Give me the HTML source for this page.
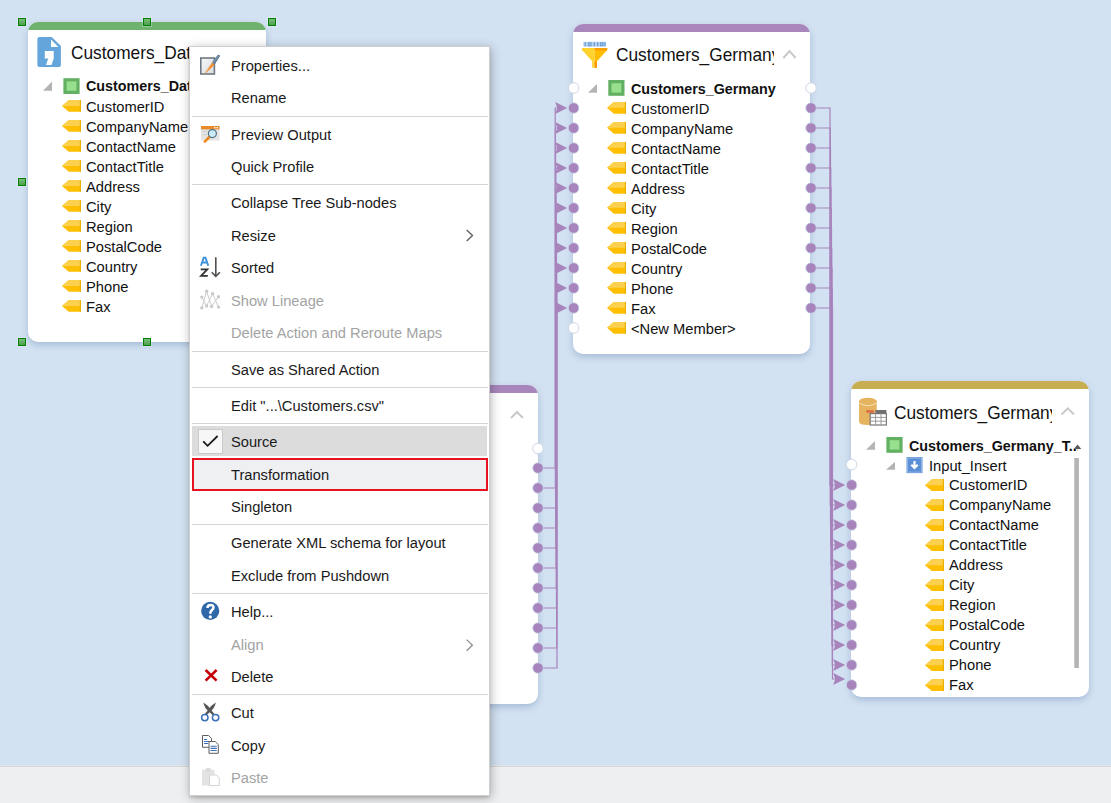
<!DOCTYPE html>
<html><head><meta charset="utf-8">
<style>
*{margin:0;padding:0;box-sizing:border-box}
html,body{width:1111px;height:803px;overflow:hidden}
body{background:#d3e2f2;position:relative;font-family:"Liberation Sans",sans-serif;color:#111}
.abs{position:absolute}
#bar{position:absolute;left:0;top:765px;width:1111px;height:38px;background:linear-gradient(#e3e9ea 0,#e3e9ea 1px,#d3d4d6 1px,#d3d4d6 2px,#f0f1f3 2px,#f0f1f3 3px,#eeeff1 3px)}
.card{position:absolute;background:#fff;border-radius:10px;overflow:hidden;box-shadow:0 3px 7px rgba(80,115,165,.34)}
.band{position:absolute;left:0;top:0;right:0;height:8px}
.tx{position:absolute;white-space:nowrap;transform-origin:0 0}
.h{position:absolute;width:8px;height:8px;background:linear-gradient(#79bd79,#4f9f4f);border:1.5px solid #008000;box-shadow:0 0 0 1px rgba(235,240,255,.35)}
#menu{position:absolute;left:189px;top:46px;width:301px;height:750px;background:#fff;border:1px solid #cfcfcf;box-shadow:1px 2px 10px rgba(0,0,0,.28),0 2px 2px rgba(0,0,0,.1)}
.msep{position:absolute;left:2px;width:296px;height:1px;background:#d5d5d5}
.hl{position:absolute;left:2px;width:295px;background:#dcdcdc}
.rd{position:absolute;left:2px;width:296px;background:#eef0f2;border:2.7px solid #e8131f}
</style></head><body>
<div id="bar"></div>

<div class="card" style="left:28px;top:22px;width:238px;height:320px"><div class="band" style="background:#6eb26e"></div></div>
<div class="card" style="left:300px;top:385px;width:238px;height:319px"><div class="band" style="background:#a886bc"></div></div>
<div class="card" style="left:573px;top:24px;width:237px;height:330px"><div class="band" style="background:#a886bc"></div></div>
<div class="card" style="left:851px;top:381px;width:238px;height:316px"><div class="band" style="background:#c7ae52"></div></div>

<svg class="abs" style="left:0;top:0" width="1111" height="803">
<path d="M39.5,37.1 H51.7 L60.9,46.1 V65 Q60.9,67 58.9,67 H39.5 Q37.4,67 37.4,65 V39.2 Q37.4,37.1 39.5,37.1 Z" fill="#64a5db"/>
<path d="M51,39.6 V47 H58.4 Z" fill="#fff"/>
<path d="M44.8,51 H53.7 V58.5 L51.5,65 H46 L48.2,58.5 H44.8 Z" fill="#fff"/>
<path d="M43.0,90.7 L52.0,81.5 L52.0,90.7 Z" fill="#b4b4b4"/>
<rect x="65.0" y="79.8" width="13" height="12.6" fill="#98df8e" stroke="#62b062" stroke-width="3.2"/>
<path d="M62,105.9 L68.8,100 H81 V111.8 H68.8 Z" fill="#fdbf00"/><path d="M62,105.9 L68.8,100 H81 V105.9 Z" fill="#fcd150"/><rect x="79.8" y="100" width="1.2" height="11.8" fill="#eab000"/>
<path d="M62,125.9 L68.8,120 H81 V131.8 H68.8 Z" fill="#fdbf00"/><path d="M62,125.9 L68.8,120 H81 V125.9 Z" fill="#fcd150"/><rect x="79.8" y="120" width="1.2" height="11.8" fill="#eab000"/>
<path d="M62,145.9 L68.8,140 H81 V151.8 H68.8 Z" fill="#fdbf00"/><path d="M62,145.9 L68.8,140 H81 V145.9 Z" fill="#fcd150"/><rect x="79.8" y="140" width="1.2" height="11.8" fill="#eab000"/>
<path d="M62,165.9 L68.8,160 H81 V171.8 H68.8 Z" fill="#fdbf00"/><path d="M62,165.9 L68.8,160 H81 V165.9 Z" fill="#fcd150"/><rect x="79.8" y="160" width="1.2" height="11.8" fill="#eab000"/>
<path d="M62,185.9 L68.8,180 H81 V191.8 H68.8 Z" fill="#fdbf00"/><path d="M62,185.9 L68.8,180 H81 V185.9 Z" fill="#fcd150"/><rect x="79.8" y="180" width="1.2" height="11.8" fill="#eab000"/>
<path d="M62,205.9 L68.8,200 H81 V211.8 H68.8 Z" fill="#fdbf00"/><path d="M62,205.9 L68.8,200 H81 V205.9 Z" fill="#fcd150"/><rect x="79.8" y="200" width="1.2" height="11.8" fill="#eab000"/>
<path d="M62,225.9 L68.8,220 H81 V231.8 H68.8 Z" fill="#fdbf00"/><path d="M62,225.9 L68.8,220 H81 V225.9 Z" fill="#fcd150"/><rect x="79.8" y="220" width="1.2" height="11.8" fill="#eab000"/>
<path d="M62,245.9 L68.8,240 H81 V251.8 H68.8 Z" fill="#fdbf00"/><path d="M62,245.9 L68.8,240 H81 V245.9 Z" fill="#fcd150"/><rect x="79.8" y="240" width="1.2" height="11.8" fill="#eab000"/>
<path d="M62,265.9 L68.8,260 H81 V271.8 H68.8 Z" fill="#fdbf00"/><path d="M62,265.9 L68.8,260 H81 V265.9 Z" fill="#fcd150"/><rect x="79.8" y="260" width="1.2" height="11.8" fill="#eab000"/>
<path d="M62,285.9 L68.8,280 H81 V291.8 H68.8 Z" fill="#fdbf00"/><path d="M62,285.9 L68.8,280 H81 V285.9 Z" fill="#fcd150"/><rect x="79.8" y="280" width="1.2" height="11.8" fill="#eab000"/>
<path d="M62,305.9 L68.8,300 H81 V311.8 H68.8 Z" fill="#fdbf00"/><path d="M62,305.9 L68.8,300 H81 V305.9 Z" fill="#fcd150"/><rect x="79.8" y="300" width="1.2" height="11.8" fill="#eab000"/>
<rect x="583.3" y="41.8" width="22.7" height="4.9" fill="#b9d3ee"/>
<g fill="#6b9fd6"><rect x="584.6" y="42.3" width="1.3" height="3.9"/><rect x="588" y="42.3" width="3.6" height="3.9"/><rect x="593.7" y="42.3" width="1.3" height="3.9"/><rect x="597" y="42.3" width="1.3" height="3.9"/><rect x="600" y="42.3" width="3.6" height="3.9"/><rect x="604.3" y="42.3" width="1.3" height="3.9"/></g>
<g fill="#b9d3ee"><rect x="589.2" y="43.5" width="1.2" height="1.5"/><rect x="601.2" y="43.5" width="1.2" height="1.5"/></g>
<path d="M582,48 H594.6 V67.7 H592.2 V61.3 L583.4,51.4 L582,50.4 Z" fill="#ffd22e"/>
<path d="M594.6,48 H607.2 V50.4 L605.8,51.4 L597,61.3 V67.7 H594.6 Z" fill="#ffbc00"/>
<path d="M594.6,48 H607.2 V50.4 H594.6 Z" fill="#ffa000"/>
<path d="M594.6,61.6 H597 V67.7 H594.6 Z" fill="#ff9300"/>
<path d="M783.4,58.0 L789.5,51.0 L795.6,58.0" stroke="#c9c9c9" stroke-width="2" fill="none"/>
<path d="M588.0,92.7 L597.0,84.0 L597.0,92.7 Z" fill="#b4b4b4"/>
<rect x="609.9" y="81.6" width="13" height="12.6" fill="#98df8e" stroke="#62b062" stroke-width="3.2"/>
<path d="M607,107.80000000000001 L613.8,101.9 H626 V113.7 H613.8 Z" fill="#fdbf00"/><path d="M607,107.80000000000001 L613.8,101.9 H626 V107.80000000000001 Z" fill="#fcd150"/><rect x="624.8" y="101.9" width="1.2" height="11.8" fill="#eab000"/>
<path d="M607,127.80000000000001 L613.8,121.9 H626 V133.70000000000002 H613.8 Z" fill="#fdbf00"/><path d="M607,127.80000000000001 L613.8,121.9 H626 V127.80000000000001 Z" fill="#fcd150"/><rect x="624.8" y="121.9" width="1.2" height="11.8" fill="#eab000"/>
<path d="M607,147.8 L613.8,141.9 H626 V153.70000000000002 H613.8 Z" fill="#fdbf00"/><path d="M607,147.8 L613.8,141.9 H626 V147.8 Z" fill="#fcd150"/><rect x="624.8" y="141.9" width="1.2" height="11.8" fill="#eab000"/>
<path d="M607,167.8 L613.8,161.9 H626 V173.70000000000002 H613.8 Z" fill="#fdbf00"/><path d="M607,167.8 L613.8,161.9 H626 V167.8 Z" fill="#fcd150"/><rect x="624.8" y="161.9" width="1.2" height="11.8" fill="#eab000"/>
<path d="M607,187.8 L613.8,181.9 H626 V193.70000000000002 H613.8 Z" fill="#fdbf00"/><path d="M607,187.8 L613.8,181.9 H626 V187.8 Z" fill="#fcd150"/><rect x="624.8" y="181.9" width="1.2" height="11.8" fill="#eab000"/>
<path d="M607,207.8 L613.8,201.9 H626 V213.70000000000002 H613.8 Z" fill="#fdbf00"/><path d="M607,207.8 L613.8,201.9 H626 V207.8 Z" fill="#fcd150"/><rect x="624.8" y="201.9" width="1.2" height="11.8" fill="#eab000"/>
<path d="M607,227.8 L613.8,221.9 H626 V233.70000000000002 H613.8 Z" fill="#fdbf00"/><path d="M607,227.8 L613.8,221.9 H626 V227.8 Z" fill="#fcd150"/><rect x="624.8" y="221.9" width="1.2" height="11.8" fill="#eab000"/>
<path d="M607,247.8 L613.8,241.9 H626 V253.70000000000002 H613.8 Z" fill="#fdbf00"/><path d="M607,247.8 L613.8,241.9 H626 V247.8 Z" fill="#fcd150"/><rect x="624.8" y="241.9" width="1.2" height="11.8" fill="#eab000"/>
<path d="M607,267.79999999999995 L613.8,261.9 H626 V273.7 H613.8 Z" fill="#fdbf00"/><path d="M607,267.79999999999995 L613.8,261.9 H626 V267.79999999999995 Z" fill="#fcd150"/><rect x="624.8" y="261.9" width="1.2" height="11.8" fill="#eab000"/>
<path d="M607,287.79999999999995 L613.8,281.9 H626 V293.7 H613.8 Z" fill="#fdbf00"/><path d="M607,287.79999999999995 L613.8,281.9 H626 V287.79999999999995 Z" fill="#fcd150"/><rect x="624.8" y="281.9" width="1.2" height="11.8" fill="#eab000"/>
<path d="M607,307.79999999999995 L613.8,301.9 H626 V313.7 H613.8 Z" fill="#fdbf00"/><path d="M607,307.79999999999995 L613.8,301.9 H626 V307.79999999999995 Z" fill="#fcd150"/><rect x="624.8" y="301.9" width="1.2" height="11.8" fill="#eab000"/>
<path d="M607,327.79999999999995 L613.8,321.9 H626 V333.7 H613.8 Z" fill="#fdbf00"/><path d="M607,327.79999999999995 L613.8,321.9 H626 V327.79999999999995 Z" fill="#fcd150"/><rect x="624.8" y="321.9" width="1.2" height="11.8" fill="#eab000"/>
<path d="M859,401.3 V421.5 Q859,425 867.8,425 Q876.7,425 876.7,421.5 V401.3 Z" fill="#e6b35e"/>
<ellipse cx="867.85" cy="401.3" rx="8.85" ry="3.6" fill="#e6b35e"/>
<path d="M859.3,403.2 Q867.8,408 876.4,403.2" stroke="#f6e2bd" stroke-width="1" fill="none"/>
<rect x="866.4" y="410.3" width="7.4" height="2.4" fill="#dd6640"/>
<rect x="870.2" y="413.6" width="16.2" height="11.4" fill="#fff" stroke="#777" stroke-width="1.2"/>
<rect x="875.4" y="410" width="11" height="3.8" fill="#707070"/>
<path d="M875.6,413.6 V425 M881,413.6 V425 M870.2,417.4 H886.4 M870.2,421.2 H886.4" stroke="#9a9a9a" stroke-width="1"/>
<path d="M1061.5,414.5 L1067.8,408.4 L1074.0,414.5" stroke="#c9c9c9" stroke-width="2" fill="none"/>
<path d="M866.0,449.7 L875.0,441.0 L875.0,449.7 Z" fill="#b4b4b4"/>
<rect x="888.0" y="438.6" width="13" height="12.6" fill="#98df8e" stroke="#62b062" stroke-width="3.2"/>
<path d="M886.0,469.8 L895.0,461.8 L895.0,469.8 Z" fill="#b4b4b4"/>
<rect x="906.5" y="457.1" width="16" height="16" fill="#5b8fd6"/><rect x="907.5" y="458.1" width="14" height="14" fill="none" stroke="#8fb4e6" stroke-width="1"/><path d="M914.5,461 V467.5 M911.3,464.8 L914.5,468 L917.7,464.8" stroke="#fff" stroke-width="2.2" fill="none"/>
<rect x="1074.3" y="458" width="4.6" height="210" fill="#b4b4b4"/>
<path d="M925,485.2 L931.8,479.3 H944 V491.1 H931.8 Z" fill="#fdbf00"/><path d="M925,485.2 L931.8,479.3 H944 V485.2 Z" fill="#fcd150"/><rect x="942.8" y="479.3" width="1.2" height="11.8" fill="#eab000"/>
<path d="M925,505.2 L931.8,499.3 H944 V511.1 H931.8 Z" fill="#fdbf00"/><path d="M925,505.2 L931.8,499.3 H944 V505.2 Z" fill="#fcd150"/><rect x="942.8" y="499.3" width="1.2" height="11.8" fill="#eab000"/>
<path d="M925,525.1999999999999 L931.8,519.3 H944 V531.0999999999999 H931.8 Z" fill="#fdbf00"/><path d="M925,525.1999999999999 L931.8,519.3 H944 V525.1999999999999 Z" fill="#fcd150"/><rect x="942.8" y="519.3" width="1.2" height="11.8" fill="#eab000"/>
<path d="M925,545.1999999999999 L931.8,539.3 H944 V551.0999999999999 H931.8 Z" fill="#fdbf00"/><path d="M925,545.1999999999999 L931.8,539.3 H944 V545.1999999999999 Z" fill="#fcd150"/><rect x="942.8" y="539.3" width="1.2" height="11.8" fill="#eab000"/>
<path d="M925,565.1999999999999 L931.8,559.3 H944 V571.0999999999999 H931.8 Z" fill="#fdbf00"/><path d="M925,565.1999999999999 L931.8,559.3 H944 V565.1999999999999 Z" fill="#fcd150"/><rect x="942.8" y="559.3" width="1.2" height="11.8" fill="#eab000"/>
<path d="M925,585.1999999999999 L931.8,579.3 H944 V591.0999999999999 H931.8 Z" fill="#fdbf00"/><path d="M925,585.1999999999999 L931.8,579.3 H944 V585.1999999999999 Z" fill="#fcd150"/><rect x="942.8" y="579.3" width="1.2" height="11.8" fill="#eab000"/>
<path d="M925,605.1999999999999 L931.8,599.3 H944 V611.0999999999999 H931.8 Z" fill="#fdbf00"/><path d="M925,605.1999999999999 L931.8,599.3 H944 V605.1999999999999 Z" fill="#fcd150"/><rect x="942.8" y="599.3" width="1.2" height="11.8" fill="#eab000"/>
<path d="M925,625.1999999999999 L931.8,619.3 H944 V631.0999999999999 H931.8 Z" fill="#fdbf00"/><path d="M925,625.1999999999999 L931.8,619.3 H944 V625.1999999999999 Z" fill="#fcd150"/><rect x="942.8" y="619.3" width="1.2" height="11.8" fill="#eab000"/>
<path d="M925,645.1999999999999 L931.8,639.3 H944 V651.0999999999999 H931.8 Z" fill="#fdbf00"/><path d="M925,645.1999999999999 L931.8,639.3 H944 V645.1999999999999 Z" fill="#fcd150"/><rect x="942.8" y="639.3" width="1.2" height="11.8" fill="#eab000"/>
<path d="M925,665.1999999999999 L931.8,659.3 H944 V671.0999999999999 H931.8 Z" fill="#fdbf00"/><path d="M925,665.1999999999999 L931.8,659.3 H944 V665.1999999999999 Z" fill="#fcd150"/><rect x="942.8" y="659.3" width="1.2" height="11.8" fill="#eab000"/>
<path d="M925,685.1999999999999 L931.8,679.3 H944 V691.0999999999999 H931.8 Z" fill="#fdbf00"/><path d="M925,685.1999999999999 L931.8,679.3 H944 V685.1999999999999 Z" fill="#fcd150"/><rect x="942.8" y="679.3" width="1.2" height="11.8" fill="#eab000"/>
<path d="M511.0,418.0 L517.0,412.0 L523.0,418.0" stroke="#c9c9c9" stroke-width="2" fill="none"/>
</svg>
<div class="tx" style="left:70.60px;top:41.36px;font-size:18.60px;line-height:24px;color:#111;transform:scaleX(0.930)">Customers_Data</div>
<div class="tx" style="left:85.60px;top:76.43px;font-size:15.20px;line-height:20px;color:#111;transform:scaleX(0.942);font-weight:bold">Customers_Data</div>
<div class="tx" style="left:85.50px;top:96.56px;font-size:15.40px;line-height:20px;color:#111;transform:scaleX(0.955)">CustomerID</div>
<div class="tx" style="left:85.50px;top:116.56px;font-size:15.40px;line-height:20px;color:#111;transform:scaleX(0.955)">CompanyName</div>
<div class="tx" style="left:85.50px;top:136.56px;font-size:15.40px;line-height:20px;color:#111;transform:scaleX(0.955)">ContactName</div>
<div class="tx" style="left:85.50px;top:156.56px;font-size:15.40px;line-height:20px;color:#111;transform:scaleX(0.955)">ContactTitle</div>
<div class="tx" style="left:85.50px;top:176.56px;font-size:15.40px;line-height:20px;color:#111;transform:scaleX(0.955)">Address</div>
<div class="tx" style="left:85.50px;top:196.56px;font-size:15.40px;line-height:20px;color:#111;transform:scaleX(0.955)">City</div>
<div class="tx" style="left:85.50px;top:216.56px;font-size:15.40px;line-height:20px;color:#111;transform:scaleX(0.955)">Region</div>
<div class="tx" style="left:85.50px;top:236.56px;font-size:15.40px;line-height:20px;color:#111;transform:scaleX(0.955)">PostalCode</div>
<div class="tx" style="left:85.50px;top:256.56px;font-size:15.40px;line-height:20px;color:#111;transform:scaleX(0.955)">Country</div>
<div class="tx" style="left:85.50px;top:276.56px;font-size:15.40px;line-height:20px;color:#111;transform:scaleX(0.955)">Phone</div>
<div class="tx" style="left:85.50px;top:296.56px;font-size:15.40px;line-height:20px;color:#111;transform:scaleX(0.955)">Fax</div>
<div class="tx" style="left:615.80px;top:43.16px;font-size:18.60px;line-height:24px;color:#111;transform:scaleX(0.930);width:170.1px;overflow:hidden">Customers_Germany</div>
<div class="tx" style="left:630.60px;top:78.53px;font-size:15.20px;line-height:20px;color:#111;transform:scaleX(0.942);font-weight:bold">Customers_Germany</div>
<div class="tx" style="left:630.50px;top:98.76px;font-size:15.40px;line-height:20px;color:#111;transform:scaleX(0.955)">CustomerID</div>
<div class="tx" style="left:630.50px;top:118.76px;font-size:15.40px;line-height:20px;color:#111;transform:scaleX(0.955)">CompanyName</div>
<div class="tx" style="left:630.50px;top:138.76px;font-size:15.40px;line-height:20px;color:#111;transform:scaleX(0.955)">ContactName</div>
<div class="tx" style="left:630.50px;top:158.76px;font-size:15.40px;line-height:20px;color:#111;transform:scaleX(0.955)">ContactTitle</div>
<div class="tx" style="left:630.50px;top:178.76px;font-size:15.40px;line-height:20px;color:#111;transform:scaleX(0.955)">Address</div>
<div class="tx" style="left:630.50px;top:198.76px;font-size:15.40px;line-height:20px;color:#111;transform:scaleX(0.955)">City</div>
<div class="tx" style="left:630.50px;top:218.76px;font-size:15.40px;line-height:20px;color:#111;transform:scaleX(0.955)">Region</div>
<div class="tx" style="left:630.50px;top:238.76px;font-size:15.40px;line-height:20px;color:#111;transform:scaleX(0.955)">PostalCode</div>
<div class="tx" style="left:630.50px;top:258.76px;font-size:15.40px;line-height:20px;color:#111;transform:scaleX(0.955)">Country</div>
<div class="tx" style="left:630.50px;top:278.76px;font-size:15.40px;line-height:20px;color:#111;transform:scaleX(0.955)">Phone</div>
<div class="tx" style="left:630.50px;top:298.76px;font-size:15.40px;line-height:20px;color:#111;transform:scaleX(0.955)">Fax</div>
<div class="tx" style="left:630.50px;top:318.76px;font-size:15.40px;line-height:20px;color:#111;transform:scaleX(0.955)">&lt;New Member&gt;</div>
<div class="tx" style="left:893.70px;top:401.06px;font-size:18.60px;line-height:24px;color:#111;transform:scaleX(0.930);width:170.2px;overflow:hidden">Customers_Germany</div>
<div class="tx" style="left:908.90px;top:436.13px;font-size:15.20px;line-height:20px;color:#111;transform:scaleX(0.942);font-weight:bold;width:178.5px;overflow:hidden">Customers_Germany_T...</div>
<div class="tx" style="left:928.50px;top:455.76px;font-size:15.40px;line-height:20px;color:#111;transform:scaleX(0.955)">Input_Insert</div>
<div class="tx" style="left:948.60px;top:475.06px;font-size:15.40px;line-height:20px;color:#111;transform:scaleX(0.955)">CustomerID</div>
<div class="tx" style="left:948.60px;top:495.06px;font-size:15.40px;line-height:20px;color:#111;transform:scaleX(0.955)">CompanyName</div>
<div class="tx" style="left:948.60px;top:515.06px;font-size:15.40px;line-height:20px;color:#111;transform:scaleX(0.955)">ContactName</div>
<div class="tx" style="left:948.60px;top:535.06px;font-size:15.40px;line-height:20px;color:#111;transform:scaleX(0.955)">ContactTitle</div>
<div class="tx" style="left:948.60px;top:555.06px;font-size:15.40px;line-height:20px;color:#111;transform:scaleX(0.955)">Address</div>
<div class="tx" style="left:948.60px;top:575.06px;font-size:15.40px;line-height:20px;color:#111;transform:scaleX(0.955)">City</div>
<div class="tx" style="left:948.60px;top:595.06px;font-size:15.40px;line-height:20px;color:#111;transform:scaleX(0.955)">Region</div>
<div class="tx" style="left:948.60px;top:615.06px;font-size:15.40px;line-height:20px;color:#111;transform:scaleX(0.955)">PostalCode</div>
<div class="tx" style="left:948.60px;top:635.06px;font-size:15.40px;line-height:20px;color:#111;transform:scaleX(0.955)">Country</div>
<div class="tx" style="left:948.60px;top:655.06px;font-size:15.40px;line-height:20px;color:#111;transform:scaleX(0.955)">Phone</div>
<div class="tx" style="left:948.60px;top:675.06px;font-size:15.40px;line-height:20px;color:#111;transform:scaleX(0.955)">Fax</div>
<svg class="abs" style="left:0;top:0" width="1111" height="803">
<path d="M543,468.0 H555.20 V108.0 H559" stroke="#a884bc" stroke-width="1.2" fill="none"/>
<path d="M543,488.0 H555.38 V128.0 H559" stroke="#a884bc" stroke-width="1.2" fill="none"/>
<path d="M543,508.0 H555.56 V148.0 H559" stroke="#a884bc" stroke-width="1.2" fill="none"/>
<path d="M543,528.0 H555.74 V168.0 H559" stroke="#a884bc" stroke-width="1.2" fill="none"/>
<path d="M543,548.0 H555.92 V188.0 H559" stroke="#a884bc" stroke-width="1.2" fill="none"/>
<path d="M543,568.0 H556.10 V208.0 H559" stroke="#a884bc" stroke-width="1.2" fill="none"/>
<path d="M543,588.0 H556.28 V228.0 H559" stroke="#a884bc" stroke-width="1.2" fill="none"/>
<path d="M543,608.0 H556.46 V248.0 H559" stroke="#a884bc" stroke-width="1.2" fill="none"/>
<path d="M543,628.0 H556.64 V268.0 H559" stroke="#a884bc" stroke-width="1.2" fill="none"/>
<path d="M543,648.0 H556.82 V288.0 H559" stroke="#a884bc" stroke-width="1.2" fill="none"/>
<path d="M543,668.0 H557.00 V308.0 H559" stroke="#a884bc" stroke-width="1.2" fill="none"/>
<path d="M567.2,108.0 L555.2,102.0 L557.2,108.0 L555.2,114.0 Z" fill="#a884bc" />
<path d="M567.2,128.0 L555.2,122.0 L557.2,128.0 L555.2,134.0 Z" fill="#a884bc" />
<path d="M567.2,148.0 L555.2,142.0 L557.2,148.0 L555.2,154.0 Z" fill="#a884bc" />
<path d="M567.2,168.0 L555.2,162.0 L557.2,168.0 L555.2,174.0 Z" fill="#a884bc" />
<path d="M567.2,188.0 L555.2,182.0 L557.2,188.0 L555.2,194.0 Z" fill="#a884bc" />
<path d="M567.2,208.0 L555.2,202.0 L557.2,208.0 L555.2,214.0 Z" fill="#a884bc" />
<path d="M567.2,228.0 L555.2,222.0 L557.2,228.0 L555.2,234.0 Z" fill="#a884bc" />
<path d="M567.2,248.0 L555.2,242.0 L557.2,248.0 L555.2,254.0 Z" fill="#a884bc" />
<path d="M567.2,268.0 L555.2,262.0 L557.2,268.0 L555.2,274.0 Z" fill="#a884bc" />
<path d="M567.2,288.0 L555.2,282.0 L557.2,288.0 L555.2,294.0 Z" fill="#a884bc" />
<path d="M567.2,308.0 L555.2,302.0 L557.2,308.0 L555.2,314.0 Z" fill="#a884bc" />
<path d="M816,108.0 H830.00 V485.0 H837" stroke="#a884bc" stroke-width="1.2" fill="none"/>
<path d="M816,128.0 H830.25 V505.0 H837" stroke="#a884bc" stroke-width="1.2" fill="none"/>
<path d="M816,148.0 H830.50 V525.0 H837" stroke="#a884bc" stroke-width="1.2" fill="none"/>
<path d="M816,168.0 H830.75 V545.0 H837" stroke="#a884bc" stroke-width="1.2" fill="none"/>
<path d="M816,188.0 H831.00 V565.0 H837" stroke="#a884bc" stroke-width="1.2" fill="none"/>
<path d="M816,208.0 H831.25 V585.0 H837" stroke="#a884bc" stroke-width="1.2" fill="none"/>
<path d="M816,228.0 H831.50 V605.0 H837" stroke="#a884bc" stroke-width="1.2" fill="none"/>
<path d="M816,248.0 H831.75 V625.0 H837" stroke="#a884bc" stroke-width="1.2" fill="none"/>
<path d="M816,268.0 H832.00 V645.0 H837" stroke="#a884bc" stroke-width="1.2" fill="none"/>
<path d="M816,288.0 H832.25 V665.0 H837" stroke="#a884bc" stroke-width="1.2" fill="none"/>
<path d="M816,308.0 H832.50 V679.0 H837" stroke="#a884bc" stroke-width="1.2" fill="none"/>
<path d="M845.2,485.0 L833.2,479.1 L835.2,485.0 L833.2,490.9 Z" fill="#a884bc" />
<path d="M845.2,505.0 L833.2,499.1 L835.2,505.0 L833.2,510.9 Z" fill="#a884bc" />
<path d="M845.2,525.0 L833.2,519.1 L835.2,525.0 L833.2,530.9 Z" fill="#a884bc" />
<path d="M845.2,545.0 L833.2,539.1 L835.2,545.0 L833.2,550.9 Z" fill="#a884bc" />
<path d="M845.2,565.0 L833.2,559.1 L835.2,565.0 L833.2,570.9 Z" fill="#a884bc" />
<path d="M845.2,585.0 L833.2,579.1 L835.2,585.0 L833.2,590.9 Z" fill="#a884bc" />
<path d="M845.2,605.0 L833.2,599.1 L835.2,605.0 L833.2,610.9 Z" fill="#a884bc" />
<path d="M845.2,625.0 L833.2,619.1 L835.2,625.0 L833.2,630.9 Z" fill="#a884bc" />
<path d="M845.2,645.0 L833.2,639.1 L835.2,645.0 L833.2,650.9 Z" fill="#a884bc" />
<path d="M845.2,665.0 L833.2,659.1 L835.2,665.0 L833.2,670.9 Z" fill="#a884bc" />
<path d="M845.2,679.0 L833.2,673.1 L835.2,679.0 L833.2,684.9 Z" fill="#a884bc" />
<path d="M1073.8,449 L1077.55,444.4 L1081.3,449 Z" fill="#5a5a5a"/>
<circle cx="573.6" cy="88.0" r="5.3" fill="#fff" stroke="#cbd6e6" stroke-width="1"/>
<circle cx="811.0" cy="88.0" r="5.3" fill="#fff" stroke="#cbd6e6" stroke-width="1"/>
<circle cx="573.6" cy="108.0" r="5.3" fill="#a884bc" stroke="rgba(200,216,236,.8)" stroke-width="1"/>
<circle cx="811.0" cy="108.0" r="5.3" fill="#a884bc" stroke="rgba(200,216,236,.8)" stroke-width="1"/>
<circle cx="851.6" cy="485.0" r="5.3" fill="#a884bc" stroke="rgba(200,216,236,.8)" stroke-width="1"/>
<circle cx="538.0" cy="468.0" r="5.3" fill="#a884bc" stroke="rgba(200,216,236,.8)" stroke-width="1"/>
<circle cx="573.6" cy="128.0" r="5.3" fill="#a884bc" stroke="rgba(200,216,236,.8)" stroke-width="1"/>
<circle cx="811.0" cy="128.0" r="5.3" fill="#a884bc" stroke="rgba(200,216,236,.8)" stroke-width="1"/>
<circle cx="851.6" cy="505.0" r="5.3" fill="#a884bc" stroke="rgba(200,216,236,.8)" stroke-width="1"/>
<circle cx="538.0" cy="488.0" r="5.3" fill="#a884bc" stroke="rgba(200,216,236,.8)" stroke-width="1"/>
<circle cx="573.6" cy="148.0" r="5.3" fill="#a884bc" stroke="rgba(200,216,236,.8)" stroke-width="1"/>
<circle cx="811.0" cy="148.0" r="5.3" fill="#a884bc" stroke="rgba(200,216,236,.8)" stroke-width="1"/>
<circle cx="851.6" cy="525.0" r="5.3" fill="#a884bc" stroke="rgba(200,216,236,.8)" stroke-width="1"/>
<circle cx="538.0" cy="508.0" r="5.3" fill="#a884bc" stroke="rgba(200,216,236,.8)" stroke-width="1"/>
<circle cx="573.6" cy="168.0" r="5.3" fill="#a884bc" stroke="rgba(200,216,236,.8)" stroke-width="1"/>
<circle cx="811.0" cy="168.0" r="5.3" fill="#a884bc" stroke="rgba(200,216,236,.8)" stroke-width="1"/>
<circle cx="851.6" cy="545.0" r="5.3" fill="#a884bc" stroke="rgba(200,216,236,.8)" stroke-width="1"/>
<circle cx="538.0" cy="528.0" r="5.3" fill="#a884bc" stroke="rgba(200,216,236,.8)" stroke-width="1"/>
<circle cx="573.6" cy="188.0" r="5.3" fill="#a884bc" stroke="rgba(200,216,236,.8)" stroke-width="1"/>
<circle cx="811.0" cy="188.0" r="5.3" fill="#a884bc" stroke="rgba(200,216,236,.8)" stroke-width="1"/>
<circle cx="851.6" cy="565.0" r="5.3" fill="#a884bc" stroke="rgba(200,216,236,.8)" stroke-width="1"/>
<circle cx="538.0" cy="548.0" r="5.3" fill="#a884bc" stroke="rgba(200,216,236,.8)" stroke-width="1"/>
<circle cx="573.6" cy="208.0" r="5.3" fill="#a884bc" stroke="rgba(200,216,236,.8)" stroke-width="1"/>
<circle cx="811.0" cy="208.0" r="5.3" fill="#a884bc" stroke="rgba(200,216,236,.8)" stroke-width="1"/>
<circle cx="851.6" cy="585.0" r="5.3" fill="#a884bc" stroke="rgba(200,216,236,.8)" stroke-width="1"/>
<circle cx="538.0" cy="568.0" r="5.3" fill="#a884bc" stroke="rgba(200,216,236,.8)" stroke-width="1"/>
<circle cx="573.6" cy="228.0" r="5.3" fill="#a884bc" stroke="rgba(200,216,236,.8)" stroke-width="1"/>
<circle cx="811.0" cy="228.0" r="5.3" fill="#a884bc" stroke="rgba(200,216,236,.8)" stroke-width="1"/>
<circle cx="851.6" cy="605.0" r="5.3" fill="#a884bc" stroke="rgba(200,216,236,.8)" stroke-width="1"/>
<circle cx="538.0" cy="588.0" r="5.3" fill="#a884bc" stroke="rgba(200,216,236,.8)" stroke-width="1"/>
<circle cx="573.6" cy="248.0" r="5.3" fill="#a884bc" stroke="rgba(200,216,236,.8)" stroke-width="1"/>
<circle cx="811.0" cy="248.0" r="5.3" fill="#a884bc" stroke="rgba(200,216,236,.8)" stroke-width="1"/>
<circle cx="851.6" cy="625.0" r="5.3" fill="#a884bc" stroke="rgba(200,216,236,.8)" stroke-width="1"/>
<circle cx="538.0" cy="608.0" r="5.3" fill="#a884bc" stroke="rgba(200,216,236,.8)" stroke-width="1"/>
<circle cx="573.6" cy="268.0" r="5.3" fill="#a884bc" stroke="rgba(200,216,236,.8)" stroke-width="1"/>
<circle cx="811.0" cy="268.0" r="5.3" fill="#a884bc" stroke="rgba(200,216,236,.8)" stroke-width="1"/>
<circle cx="851.6" cy="645.0" r="5.3" fill="#a884bc" stroke="rgba(200,216,236,.8)" stroke-width="1"/>
<circle cx="538.0" cy="628.0" r="5.3" fill="#a884bc" stroke="rgba(200,216,236,.8)" stroke-width="1"/>
<circle cx="573.6" cy="288.0" r="5.3" fill="#a884bc" stroke="rgba(200,216,236,.8)" stroke-width="1"/>
<circle cx="811.0" cy="288.0" r="5.3" fill="#a884bc" stroke="rgba(200,216,236,.8)" stroke-width="1"/>
<circle cx="851.6" cy="665.0" r="5.3" fill="#a884bc" stroke="rgba(200,216,236,.8)" stroke-width="1"/>
<circle cx="538.0" cy="648.0" r="5.3" fill="#a884bc" stroke="rgba(200,216,236,.8)" stroke-width="1"/>
<circle cx="573.6" cy="308.0" r="5.3" fill="#a884bc" stroke="rgba(200,216,236,.8)" stroke-width="1"/>
<circle cx="811.0" cy="308.0" r="5.3" fill="#a884bc" stroke="rgba(200,216,236,.8)" stroke-width="1"/>
<circle cx="851.6" cy="685.0" r="5.3" fill="#a884bc" stroke="rgba(200,216,236,.8)" stroke-width="1"/>
<circle cx="538.0" cy="668.0" r="5.3" fill="#a884bc" stroke="rgba(200,216,236,.8)" stroke-width="1"/>
<circle cx="573.6" cy="328.0" r="5.3" fill="#fff" stroke="#cbd6e6" stroke-width="1"/>
<circle cx="851.6" cy="464.5" r="5.3" fill="#fff" stroke="#cbd6e6" stroke-width="1"/>
<circle cx="538.0" cy="448.5" r="5.3" fill="#fff" stroke="#cbd6e6" stroke-width="1"/>
</svg>
<div class="h" style="left:18px;top:18px"></div><div class="h" style="left:143px;top:18px"></div><div class="h" style="left:268px;top:18px"></div><div class="h" style="left:18px;top:178px"></div><div class="h" style="left:18px;top:338px"></div><div class="h" style="left:143px;top:338px"></div><div id="menu"><div class="tx" style="left:40.80px;top:2.86px;font-size:15.40px;line-height:32px;color:#1a1a1a;transform:scaleX(0.953)">Properties...</div>
<div class="tx" style="left:40.80px;top:35.36px;font-size:15.40px;line-height:32px;color:#1a1a1a;transform:scaleX(0.953)">Rename</div>
<div class="msep" style="top:68.50px"></div>
<div class="tx" style="left:40.80px;top:71.61px;font-size:15.40px;line-height:32px;color:#1a1a1a;transform:scaleX(0.953)">Preview Output</div>
<div class="tx" style="left:40.80px;top:104.11px;font-size:15.40px;line-height:32px;color:#1a1a1a;transform:scaleX(0.953)">Quick Profile</div>
<div class="msep" style="top:137.25px"></div>
<div class="tx" style="left:40.80px;top:140.36px;font-size:15.40px;line-height:32px;color:#1a1a1a;transform:scaleX(0.953)">Collapse Tree Sub-nodes</div>
<div class="tx" style="left:40.80px;top:172.86px;font-size:15.40px;line-height:32px;color:#1a1a1a;transform:scaleX(0.953)">Resize</div>
<div class="tx" style="left:40.80px;top:205.36px;font-size:15.40px;line-height:32px;color:#1a1a1a;transform:scaleX(0.953)">Sorted</div>
<div class="tx" style="left:40.80px;top:237.86px;font-size:15.40px;line-height:32px;color:#a3a3a3;transform:scaleX(0.953)">Show Lineage</div>
<div class="tx" style="left:40.80px;top:270.36px;font-size:15.40px;line-height:32px;color:#a3a3a3;transform:scaleX(0.953)">Delete Action and Reroute Maps</div>
<div class="msep" style="top:303.50px"></div>
<div class="tx" style="left:40.80px;top:306.61px;font-size:15.40px;line-height:32px;color:#1a1a1a;transform:scaleX(0.953)">Save as Shared Action</div>
<div class="msep" style="top:339.75px"></div>
<div class="tx" style="left:40.80px;top:342.86px;font-size:15.40px;line-height:32px;color:#1a1a1a;transform:scaleX(0.953)">Edit &quot;...\Customers.csv&quot;</div>
<div class="msep" style="top:376.00px"></div>
<div class="hl" style="top:378.65px;height:30px"></div>
<div class="tx" style="left:40.80px;top:379.11px;font-size:15.40px;line-height:32px;color:#1a1a1a;transform:scaleX(0.953)">Source</div>
<div class="rd" style="top:410.50px;height:33.2px"></div>
<div class="tx" style="left:40.80px;top:411.61px;font-size:15.40px;line-height:32px;color:#1a1a1a;transform:scaleX(0.953)">Transformation</div>
<div class="tx" style="left:40.80px;top:444.11px;font-size:15.40px;line-height:32px;color:#1a1a1a;transform:scaleX(0.953)">Singleton</div>
<div class="msep" style="top:477.25px"></div>
<div class="tx" style="left:40.80px;top:480.36px;font-size:15.40px;line-height:32px;color:#1a1a1a;transform:scaleX(0.953)">Generate XML schema for layout</div>
<div class="tx" style="left:40.80px;top:512.86px;font-size:15.40px;line-height:32px;color:#1a1a1a;transform:scaleX(0.953)">Exclude from Pushdown</div>
<div class="msep" style="top:546.00px"></div>
<div class="tx" style="left:40.80px;top:549.11px;font-size:15.40px;line-height:32px;color:#1a1a1a;transform:scaleX(0.953)">Help...</div>
<div class="tx" style="left:40.80px;top:581.61px;font-size:15.40px;line-height:32px;color:#a3a3a3;transform:scaleX(0.953)">Align</div>
<div class="tx" style="left:40.80px;top:614.11px;font-size:15.40px;line-height:32px;color:#1a1a1a;transform:scaleX(0.953)">Delete</div>
<div class="msep" style="top:647.25px"></div>
<div class="tx" style="left:40.80px;top:650.36px;font-size:15.40px;line-height:32px;color:#1a1a1a;transform:scaleX(0.953)">Cut</div>
<div class="tx" style="left:40.80px;top:682.86px;font-size:15.40px;line-height:32px;color:#1a1a1a;transform:scaleX(0.953)">Copy</div>
<div class="tx" style="left:40.80px;top:715.36px;font-size:15.40px;line-height:32px;color:#a3a3a3;transform:scaleX(0.953)">Paste</div></div><svg id="micons" class="abs" style="left:0;top:0" width="1111" height="803" viewBox="0 0 1111 803">
<defs>
<linearGradient id="gprop" x1="0" y1="0" x2="1" y2="1"><stop offset="0" stop-color="#f7f7f7"/><stop offset="1" stop-color="#d9dbde"/></linearGradient>
</defs>
<!-- properties -->
<rect x="200.8" y="58" width="13.6" height="16" fill="url(#gprop)" stroke="#6e7882" stroke-width="1.6"/>
<path d="M204.1,74.7 L212.1,62.3 L214.5,64.7 Z" fill="#ee8a2a"/>
<path d="M205.5,72.3 L212.3,63.2" stroke="#f7b57a" stroke-width="0.6"/>
<path d="M212.1,62.3 L217.3,55.5 Q219.2,54 220.1,56 L214.5,64.7 Z" fill="#5b7594"/>
<path d="M213.3,62.6 L218.4,56" stroke="#b9c8da" stroke-width="0.6"/>
<!-- preview -->
<rect x="201" y="126" width="18.5" height="14.5" fill="#e4e4e4"/>
<rect x="201" y="126" width="18.5" height="3.4" fill="#e8892a"/>
<rect x="214" y="127" width="1.5" height="1.3" fill="#fff"/><rect x="216.5" y="127" width="1.5" height="1.3" fill="#fff"/>
<path d="M203,131.5 H207 M203,134.5 H207" stroke="#cfcfcf" stroke-width="1"/>
<path d="M209.8,136.5 L204.8,141.6" stroke="#ec8a1e" stroke-width="2.6" stroke-linecap="round"/>
<circle cx="212.4" cy="133.6" r="4" fill="#c9ebfa" stroke="#56707f" stroke-width="1.2"/>
<!-- sorted -->
<path d="M200.9,265.7 L203.7,257.7 H205.5 L208.3,265.7 M202.2,262.5 H207" stroke="#3d94da" stroke-width="1.9" fill="none"/>
<path d="M200.7,269.3 H207.3 L201.1,275.8 H207.8" stroke="#333" stroke-width="1.8" fill="none"/>
<path d="M215.8,257.2 V276" stroke="#505050" stroke-width="1.6"/>
<path d="M211.7,272.2 L215.8,276.3 L219.9,272.2" stroke="#505050" stroke-width="1.6" fill="none"/>
<!-- lineage -->
<g stroke="#cdcdcd" stroke-width="1" fill="none">
<path d="M201.8,297.1 L206.6,306 L212.6,293.6 L218.5,307.1"/>
<path d="M201.8,307.9 L206.6,291.3 L211.6,306.4 L218.5,296.7"/>
</g>
<g fill="#c9c9c9">
<circle cx="206.6" cy="291.3" r="1.7"/><circle cx="212.6" cy="293.6" r="1.7"/><circle cx="201.8" cy="297.1" r="1.7"/><circle cx="218.5" cy="296.7" r="1.7"/>
<circle cx="206.6" cy="306" r="1.7"/><circle cx="211.6" cy="306.4" r="1.7"/><circle cx="201.8" cy="307.9" r="1.7"/><circle cx="218.5" cy="307.1" r="1.7"/>
</g>
<!-- resize chevron -->
<path d="M466.7,229.9 L472.5,235.4 L466.7,240.9" stroke="#606060" stroke-width="1.4" fill="none"/>
<!-- checkbox -->
<rect x="198.5" y="429.5" width="24" height="24" fill="#f7f7f7" stroke="#c9c9c9" stroke-width="1"/>
<path d="M203.2,441.4 L207.6,445.8 L217.6,436" stroke="#1a1a1a" stroke-width="1.8" fill="none"/>
<!-- help -->
<circle cx="210.2" cy="610.9" r="9.1" fill="#2e68a8"/>
<path d="M207.5,608 C207.5,605.9 208.8,604.9 210.5,604.9 C212.3,604.9 213.5,606 213.5,607.6 C213.5,609.7 210.6,610.3 210.4,612.6 V613.8" stroke="#fff" stroke-width="2.5" fill="none"/>
<circle cx="210.3" cy="616.9" r="1.6" fill="#fff"/>
<!-- align chevron -->
<path d="M466.6,639.6 L472.4,645.2 L466.6,650.8" stroke="#8f8f8f" stroke-width="1.3" fill="none"/>
<!-- delete -->
<path d="M205.6,670 L216.6,680.6 M216.6,670 L205.6,680.6" stroke="#c5000b" stroke-width="2.6"/>
<!-- cut -->
<path d="M203.4,702.6 Q208.6,705.6 211.3,710.2 L214.3,713.8 L212.8,715.3 L209.3,712 Q204.4,708.4 203.4,702.6 Z" fill="#555"/>
<path d="M215.8,702.6 Q210.6,705.6 207.9,710.2 L204.9,713.8 L206.4,715.3 L209.9,712 Q214.8,708.4 215.8,702.6 Z" fill="#555"/>
<circle cx="204.8" cy="717.6" r="3.2" fill="#fff" stroke="#3b6fb6" stroke-width="1.5"/>
<circle cx="215.6" cy="717.6" r="3.2" fill="#fff" stroke="#3b6fb6" stroke-width="1.5"/>
<!-- copy -->
<path d="M202.5,735.5 H208.6 L211.5,738.4 V747.3 H202.5 Z" fill="#fff" stroke="#5d5d5d" stroke-width="1"/>
<path d="M204,739.5 H207 M204,741.5 H209 M204,743.5 H208" stroke="#3f6fb6" stroke-width="1"/>
<path d="M209,741.5 H215.2 L218.3,744.6 V753.3 H209 Z" fill="#fff" stroke="#5d5d5d" stroke-width="1"/>
<path d="M210.5,746.3 H216.8 M210.5,748.4 H216.8 M210.5,750.5 H216.8" stroke="#3f6fb6" stroke-width="1.1"/>
<!-- paste -->
<rect x="202" y="769.8" width="12.5" height="15.8" fill="#e3e3e3"/>
<rect x="205.6" y="768.2" width="5" height="3" fill="#d8d8d8"/>
<path d="M209.5,775 H216.3 L219.3,778 V785.6 H209.5 Z" fill="#fff" stroke="#d2d2d2" stroke-width="1"/>
</svg>
</body></html>
